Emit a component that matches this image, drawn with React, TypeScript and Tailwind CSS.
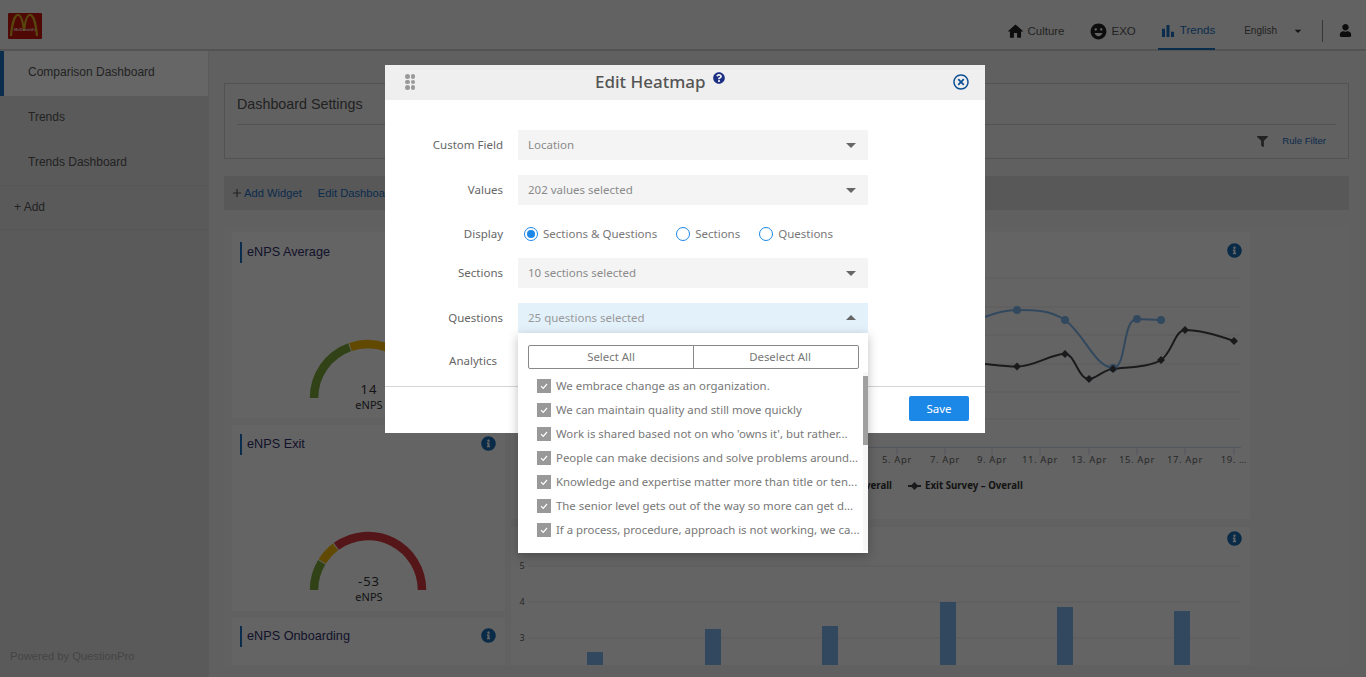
import React from 'react';
import { MdHome, MdEmojiEmotions, MdBarChart, MdArrowDropDown, MdArrowDropUp, MdAdd } from 'react-icons/md';
import { FaUser, FaFilter, FaInfoCircle, FaQuestionCircle, FaRegTimesCircle } from 'react-icons/fa';

const questions = [
    'We embrace change as an organization.',
    'We can maintain quality and still move quickly',
    "Work is shared based not on who 'owns it', but rather...",
    'People can make decisions and solve problems around...',
    'Knowledge and expertise matter more than title or ten...',
    'The senior level gets out of the way so more can get d...',
    'If a process, procedure, approach is not working, we ca...',
];

function arc(cx: number, cy: number, r: number, from: number, to: number) {
    const pt = (a: number) => {
        const t = (a * Math.PI) / 180;
        return `${(cx - r * Math.cos(t)).toFixed(2)} ${(cy - r * Math.sin(t)).toFixed(2)}`;
    };
    return `M${pt(from)} A${r} ${r} 0 0 1 ${pt(to)}`;
}

function Gauge({ value, stops }: { value: string; stops: number[] }) {
    return (
        <div className="relative w-[272px] h-[82px] flex flex-col items-center">
            <svg width="130" height="66" viewBox="0 0 130 66" className="ml-[-1px]">
                <path d={arc(65, 62, 54, 0, stops[0])} fill="none" stroke="#7aa53b" strokeWidth="8.5" />
                <path d={arc(65, 62, 54, stops[0] + 1, stops[1])} fill="none" stroke="#f2b705" strokeWidth="8.5" />
                <path d={arc(65, 62, 54, stops[1] + 1, 180)} fill="none" stroke="#d5393f" strokeWidth="8.5" />
            </svg>
            <div className="absolute top-[45px] left-0 w-[272px] text-center font-['Noto_Sans',sans-serif] text-[#333] leading-[16px] ml-[1px]">
                <div className="text-[13px] tracking-[1px]">{value}</div>
                <div className="text-[11px]">eNPS</div>
            </div>
        </div>
    );
}

function CardTitle({ title, info = true }: { title: string; info?: boolean }) {
    return (
        <div className="flex items-center justify-between h-[21px] pl-[8px] pr-[9px]">
            <div className="border-l-[2px] border-[#1b6fc0] pl-[5px] text-[12.7px] leading-[21px] text-[#30306b]">{title}</div>
            {info && <FaInfoCircle className="text-[15px] text-[#1a6cb5] mt-[-3px]" />}
        </div>
    );
}

function Select({ text, open = false }: { text: string; open?: boolean }) {
    return (
        <div className={`w-[350px] h-[30px] flex items-center justify-between pl-[10px] pr-[5px] ${open ? 'bg-[#e3f1fb] text-[#999]' : 'bg-[#f4f4f4] text-[#8a8a8a]'}`}>
            <span>{text}</span>
            {open ? <MdArrowDropUp className="text-[24px] text-[#666]" /> : <MdArrowDropDown className="text-[24px] text-[#666]" />}
        </div>
    );
}

function Radio({ label, on = false }: { label: string; on?: boolean }) {
    return (
        <div className="flex items-center gap-[5px]">
            <div className="w-[14px] h-[14px] rounded-full border border-[#1b87e6] flex items-center justify-center">
                {on && <div className="w-[8px] h-[8px] rounded-full bg-[#1b87e6]" />}
            </div>
            <span className="text-[#777]">{label}</span>
        </div>
    );
}

function Field({ label, className, children }: { label: string; className?: string; children?: React.ReactNode }) {
    return (
        <div className={`flex items-center ${className ?? ''}`}>
            <div className="w-[118px] text-right text-[#666]">{label}</div>
            <div className="ml-[15px]">{children}</div>
        </div>
    );
}

function LineChart() {
    const ticks = [
        [897, '5. Apr'],
        [945, '7. Apr'],
        [992, '9. Apr'],
        [1040, '11. Apr'],
        [1089, '13. Apr'],
        [1137, '15. Apr'],
        [1185, '17. Apr'],
        [1234, '19. …'],
    ] as const;
    const blue = [[1017, 310], [1065, 320], [1113, 368], [1137, 319], [1161, 320]];
    const black = [[1017, 366.5], [1065, 354], [1089, 379], [1113, 369], [1161, 360], [1185, 330], [1234, 341]];
    return (
        <svg width="739" height="266" viewBox="511 253 739 266" className="block">
            {[278, 307, 335, 364, 392, 419].map((y) => (
                <line key={y} x1="525" x2="1241" y1={y} y2={y} stroke="#e6e6e6" />
            ))}
            <line x1="525" x2="1241" y1="447.5" y2="447.5" stroke="#ccd6eb" />
            {ticks.map(([x, t]) => (
                <g key={t}>
                    <line x1={x} x2={x} y1="447" y2="455" stroke="#ccd6eb" />
                    <text x={x} y="463" textAnchor="middle" fontSize="9.5" letterSpacing="0.6" fill="#666" fontFamily="'Noto Sans', sans-serif">{t}</text>
                </g>
            ))}
            <path d="M985 317 C995 313 1005 310 1017 310 C1035 310 1050 310 1065 320 C1085 335 1095 367 1113 368 C1127 368 1122 319 1137 319 L1161 320" fill="none" stroke="#7cb5ec" strokeWidth="2" />
            <path d="M985 364 C995 365 1005 366.5 1017 366.5 C1035 366.5 1050 354 1065 354 C1075 354 1078 379 1089 379 C1095 379 1105 369 1113 369 C1130 367 1150 367 1161 360 C1172 353 1175 330 1185 330 C1200 330 1220 336 1234 341" fill="none" stroke="#434348" strokeWidth="2" />
            {blue.map(([x, y]) => <circle key={x} cx={x} cy={y} r="4" fill="#7cb5ec" />)}
            {black.map(([x, y]) => <path key={x} d={`M${x} ${y - 4}L${x + 4} ${y}L${x} ${y + 4}L${x - 4} ${y}Z`} fill="#434348" />)}
            <text x="892" y="489" textAnchor="end" fontSize="9.7" fontWeight="700" fill="#333" fontFamily="'Noto Sans', sans-serif">Overall</text>
            <line x1="908" x2="921" y1="486" y2="486" stroke="#434348" strokeWidth="2" />
            <path d="M914.5 482L918.5 486L914.5 490L910.5 486Z" fill="#434348" />
            <text x="925" y="489" fontSize="9.7" fontWeight="700" fill="#333" fontFamily="'Noto Sans', sans-serif">Exit Survey – Overall</text>
        </svg>
    );
}

function BarChart() {
    const bars = [[587, 652], [705, 629], [822, 626], [940, 602], [1057, 607], [1174, 611]];
    return (
        <svg width="739" height="119" viewBox="511 546 739 119" className="block">
            {[566, 602, 638].map((y) => (
                <line key={y} x1="528" x2="1241" y1={y} y2={y} stroke="#e6e6e6" />
            ))}
            {[[566, '5'], [602, '4'], [638, '3']].map(([y, t]) => (
                <text key={t} x="522" y={Number(y) + 3} textAnchor="middle" fontSize="9" fill="#666" fontFamily="'Noto Sans', sans-serif">{t}</text>
            ))}
            {bars.map(([x, y]) => <rect key={x} x={x} y={y} width="16" height={665 - y} fill="#7cb5ec" />)}
        </svg>
    );
}

export default function App() {
    return (
        <div className="relative w-[1366px] h-[677px] overflow-hidden bg-[#f0f0f0] font-['Liberation_Sans',sans-serif]">
            {/* Header */}
            <header className="h-[51px] bg-[#f5f5f5] border-b-2 border-[#d0d0d0] flex items-start justify-between">
                <div className="ml-[8px] mt-[13px] w-[34px] h-[26px] bg-[#c8160c] rounded-[1px] relative overflow-hidden">
                    <svg width="34" height="26" viewBox="0 0 34 26" className="block">
                        <path d="M3 23 C4 10 7 2 10 2 C13 2 15 9 16 18 C17 9 19 2 22 2 C25 2 28 10 29 23" fill="none" stroke="#d9ae22" strokeWidth="2.2" />
                    </svg>
                    <span className="absolute left-[6px] top-[14px] text-[4px] leading-[5px] text-[#ffd9d0] font-bold">McDonald's</span>
                </div>
                <nav className="flex items-center h-[49px] text-[11.5px] text-[#444] mt-[1px]">
                    <div className="flex items-center gap-[2px] mt-[12px]">
                        <MdHome className="text-[19px] text-[#222]" />
                        <span className="text-[#555]">Culture</span>
                    </div>
                    <div className="flex items-center gap-[4px] ml-[24px] mt-[12px]">
                        <MdEmojiEmotions className="text-[19px] text-[#222]" />
                        <span className="text-[#555]">EXO</span>
                    </div>
                    <div className="flex items-center gap-[3px] ml-[22px] h-[49px] pt-[12px] border-b-2 border-[#1b6fc0] pl-[1px] text-[#1b6fc0]">
                        <MdBarChart className="text-[18px]" />
                        <span>Trends</span>
                    </div>
                    <span className="ml-[29px] text-[10px] text-[#555] mt-[10px]">English</span>
                    <MdArrowDropDown className="ml-[13px] text-[16px] text-[#333] mt-[10px]" />
                    <div className="ml-[16px] w-[1px] h-[22px] bg-[#888] mt-[11px]" />
                    <FaUser className="ml-[16px] mr-[14px] text-[13px] text-[#222] mt-[9px]" />
                </nav>
            </header>

            <div className="flex h-[626px]">
                {/* Sidebar */}
                <aside className="relative w-[209px] bg-[#e2e2e2] border-r border-[#e4e4e4] text-[12px] text-[#555]">
                    <div className="h-[45px] bg-white border-l-[4px] border-[#1b6fc0] pl-[24px] leading-[42px] border-b-0">Comparison Dashboard</div>
                    <div className="h-[45px] pl-[28px] leading-[43px]">Trends</div>
                    <div className="h-[45px] pl-[28px] leading-[43px] border-b border-[#d8d8d8]">Trends Dashboard</div>
                    <div className="h-[44px] pl-[14px] leading-[42px] border-b border-[#d8d8d8]">+ Add</div>
                    <div className="absolute left-[10px] top-[597px] text-[11.2px] text-[#aaa]">Powered by QuestionPro</div>
                </aside>

                {/* Main */}
                <main className="flex-1 pl-[15px] pr-[17px] pt-[32px]">
                    <section className="h-[76px] border border-[#ccc] bg-[#f2f2f2] px-[12px]">
                        <div className="h-[41px] border-b border-[#ccc] text-[14.3px] leading-[40px] text-[#555]">Dashboard Settings</div>
                        <div className="flex justify-end items-center h-[32px] pr-[10px] text-[9.6px] text-[#1b6fc0]">
                            <FaFilter className="text-[11px] text-[#555] mr-[14px]" />
                            <span>Rule Filter</span>
                        </div>
                    </section>
                    <div className="h-[34px] mt-[17px] bg-[#dcdcdc] flex items-center pl-[6px] gap-[16px] text-[11.2px] text-[#1b6fc0]">
                        <span className="flex items-center"><MdAdd className="text-[#555] text-[14px] mt-[1px]" />Add Widget</span>
                        <span>Edit Dashboard</span>
                    </div>
                    <div className="mt-[16px] h-[440px] bg-[#f2f2f2] pt-[6px] pl-[8px] flex gap-[6px]">
                        <div className="w-[273px] flex flex-col gap-[7px]">
                            <div className="h-[186px] bg-[#f9f9f9] pt-[10px]">
                                <CardTitle title="eNPS Average" info={false} />
                                <div className="mt-[73px]"><Gauge value="14" stops={[70, 110]} /></div>
                            </div>
                            <div className="h-[186px] bg-[#f9f9f9] pt-[9px]">
                                <CardTitle title="eNPS Exit" />
                                <div className="mt-[73px]"><Gauge value="-53" stops={[31, 53]} /></div>
                            </div>
                            <div className="h-[47px] bg-[#f9f9f9] pt-[8px]">
                                <CardTitle title="eNPS Onboarding" />
                            </div>
                        </div>
                        <div className="w-[739px] flex flex-col gap-[8px]">
                            <div className="h-[287px] bg-[#f9f9f9] pt-[11px]">
                                <div className="flex justify-end pr-[8px] h-[10px]"><FaInfoCircle className="text-[15px] text-[#1a6cb5]" /></div>
                                <LineChart />
                            </div>
                            <div className="h-[138px] bg-[#f9f9f9] pt-[4px]">
                                <div className="flex justify-end pr-[8px] h-[15px]"><FaInfoCircle className="text-[15px] text-[#1a6cb5]" /></div>
                                <BarChart />
                            </div>
                        </div>
                    </div>
                </main>
            </div>

            {/* Backdrop */}
            <div className="absolute inset-0 bg-black/60" />

            {/* Modal */}
            <div className="absolute left-[385px] top-[65px] w-[600px] h-[368px] bg-white font-['Noto_Sans',sans-serif] text-[11.5px]">
                <div className="relative h-[35px] bg-[#efefef] flex items-center pl-[210px]">
                    <div className="absolute left-[20px] top-[9px] grid grid-cols-2 gap-x-[1px] gap-y-[1px]">
                        {[0, 1, 2, 3, 4, 5].map((i) => (
                            <div key={i} className="w-[4.5px] h-[4.5px] rounded-full bg-[#999]" />
                        ))}
                    </div>
                    <span className="text-[17px] font-medium text-[#555] mb-[2px]">Edit Heatmap</span>
                    <FaQuestionCircle className="text-[12px] text-[#1c2f85] ml-[7px] mb-[10px]" />
                    <FaRegTimesCircle className="absolute right-[16px] top-[9px] text-[16px] text-[#0d4f94]" />
                </div>
                <div className="pt-[30px]">
                    <Field label="Custom Field"><Select text="Location" /></Field>
                    <Field label="Values" className="mt-[15px]"><Select text="202 values selected" /></Field>
                    <Field label="Display" className="mt-[15px] h-[28px]">
                        <div className="flex gap-[19px] pl-[6px]">
                            <Radio label="Sections & Questions" on />
                            <Radio label="Sections" />
                            <Radio label="Questions" />
                        </div>
                    </Field>
                    <Field label="Sections" className="mt-[10px]"><Select text="10 sections selected" /></Field>
                    <Field label="Questions" className="mt-[15px]"><Select text="25 questions selected" open /></Field>
                    <div className="mt-[15px] h-[26px] flex items-center text-[#666]">
                        <div className="w-[112px] text-right">Analytics</div>
                    </div>
                </div>
                <div className="mt-[12px] h-[47px] border-t border-[#d4d4d4] flex justify-end pr-[16px] pt-[9px]">
                    <button className="w-[60px] h-[25px] rounded-[2px] bg-[#1b87e6] text-white">Save</button>
                </div>
            </div>

            {/* Questions dropdown */}
            <div className="absolute left-[518px] top-[333px] w-[350px] h-[220px] bg-white shadow-[0_3px_10px_rgba(0,0,0,0.25)] font-['Noto_Sans',sans-serif] text-[11.4px] text-[#777]">
                <div className="flex pl-[10px] pt-[12px]">
                    <button className="w-[166px] h-[24px] border border-[#888] rounded-l-[2px] text-[#777]">Select All</button>
                    <button className="w-[166px] h-[24px] ml-[-1px] pl-[8px] border border-[#888] rounded-r-[2px] text-[#777]">Deselect All</button>
                </div>
                <div className="relative mt-[5px]">
                    <div className="absolute right-0 top-[-2px] w-[5px] h-[179px] bg-[#f7f7f7]">
                        <div className="mt-[4px] h-[69px] bg-[#a0a0a0]" />
                    </div>
                    <ul>
                        {questions.map((q) => (
                            <li key={q} className="h-[24px] flex items-center pl-[19px]">
                                <div className="w-[14px] h-[14px] bg-[#999] flex items-center justify-center shrink-0">
                                    <svg width="10" height="10" viewBox="0 0 10 10"><path d="M2 5.2L4.2 7.4L8 3" fill="none" stroke="#fff" strokeWidth="1.2" /></svg>
                                </div>
                                <span className="ml-[5px] whitespace-nowrap">{q}</span>
                            </li>
                        ))}
                    </ul>
                </div>
            </div>
        </div>
    );
}
